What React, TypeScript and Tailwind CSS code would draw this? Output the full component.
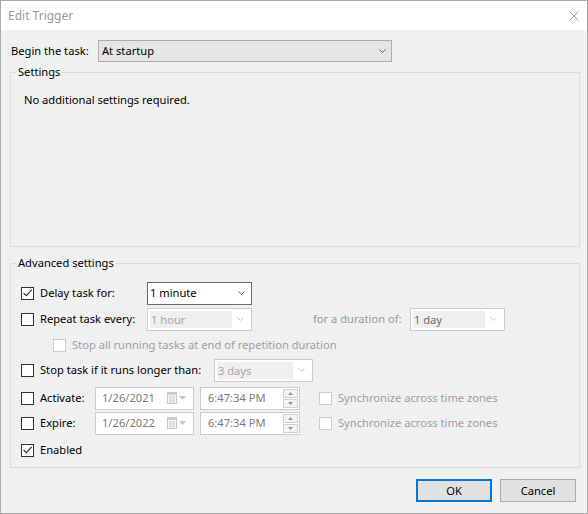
import React from "react";

const Chevron = ({ color = "#606060" }: { color?: string }) => (
  <svg width="7" height="4" viewBox="0 0 7 4" className="block">
    <path d="M0.5 0.5 L3.5 3.5 L6.5 0.5" fill="none" stroke={color} strokeWidth="1" />
  </svg>
);

const Box = ({ checked = false, disabled = false }: { checked?: boolean; disabled?: boolean }) => (
  <div
    className={
      disabled
        ? "w-[13px] h-[13px] border border-[#cccccc] bg-white shrink-0 flex items-center justify-center"
        : "w-[13px] h-[13px] border border-[#333333] bg-white shrink-0 flex items-center justify-center"
    }
  >
    {checked && (
      <svg width="11" height="11" viewBox="0 0 11 11" className="block">
        <path d="M1.5 4.8 L4.4 7.7 L9.6 1.8" fill="none" stroke="#333333" strokeWidth="1.2" />
      </svg>
    )}
  </div>
);

const DisabledCombo = ({ text, w, textColor }: { text: string; w: string; textColor: string }) => (
  <div className={`${w} h-[23px] border border-[#cccccc] bg-white p-[2px] flex shrink-0`}>
    <div className={`flex-1 bg-[#efefef] pl-[1px] leading-[17px] ${textColor}`}>{text}</div>
    <div className="w-[17px] flex items-center justify-center">
      <Chevron color="#c4c4c4" />
    </div>
  </div>
);

const CalIcon = () => (
  <svg width="10" height="12" viewBox="0 0 10 12" className="block">
    <rect x="0.5" y="0.5" width="9" height="11" fill="#f4f4f4" stroke="#c8c8c8" />
    <rect x="1" y="1" width="8" height="2" fill="#d0d0d0" />
    <path d="M2 5h6M2 7h6M2 9h6M3.5 4v7M6.5 4v7" stroke="#d6d6d6" strokeWidth="1" />
  </svg>
);

const DatePicker = ({ text }: { text: string }) => (
  <div className="w-[99px] h-[23px] border border-[#cccccc] bg-white flex items-center shrink-0">
    <span className="pl-[6px] text-[#7a7a7a] w-[71px]">{text}</span>
    <CalIcon />
    <svg width="7" height="4" viewBox="0 0 7 4" className="block ml-[2px]">
      <path d="M0 0 L7 0 L3.5 4Z" fill="#c4c4c4" />
    </svg>
  </div>
);

const Spin = () => (
  <div className="flex flex-col gap-[1px]">
    <div className="w-[15px] h-[9px] border border-[#d0d0d0] bg-[#f3f3f3] flex items-center justify-center">
      <svg width="5" height="3" viewBox="0 0 5 3" className="block">
        <path d="M0 3 L2.5 0 L5 3Z" fill="#9a9a9a" />
      </svg>
    </div>
    <div className="w-[15px] h-[9px] border border-[#d0d0d0] bg-[#f3f3f3] flex items-center justify-center">
      <svg width="5" height="3" viewBox="0 0 5 3" className="block">
        <path d="M0 0 L5 0 L2.5 3Z" fill="#9a9a9a" />
      </svg>
    </div>
  </div>
);

const TimePicker = () => (
  <div className="w-[100px] h-[23px] border border-[#cccccc] bg-white flex items-center justify-between pr-[1px] shrink-0 ml-[6px]">
    <span className="pl-[7px] text-[#7a7a7a]">6:47:34 PM</span>
    <Spin />
  </div>
);

export default function App() {
  return (
    <div className="w-[588px] h-[514px] border border-[#aaaaaa] bg-[#f0f0f0] flex flex-col text-[11.15px] leading-[16px] text-black [font-family:'Noto_Sans',sans-serif]">
      {/* title bar */}
      <div className="h-[29px] bg-white flex items-center justify-between pl-[7px] pr-[8px] shrink-0">
        <span className="text-[#999999] text-[12px]">Edit Trigger</span>
        <svg width="10" height="10" viewBox="0 0 10 10" className="block">
          <path d="M0.5 0.5 L9.5 9.5 M9.5 0.5 L0.5 9.5" stroke="#9a9a9a" strokeWidth="1" />
        </svg>
      </div>

      <div className="flex-1 flex flex-col pl-[9px] pr-[7px]">
        {/* begin row */}
        <div className="mt-[10px] h-[22px] flex items-center">
          <span className="w-[88px] pl-[1px]">Begin the task:</span>
          <div className="w-[294px] h-[22px] bg-[#e5e5e5] border border-[#adadad] flex items-center justify-between pl-[3px] pr-[5px]">
            <span>At startup</span>
            <Chevron />
          </div>
        </div>

        {/* Settings group */}
        <div className="mt-[10px] h-[175px] border border-[#dcdcdc] flex flex-col">
          <div className="-mt-[9px] ml-[5px] px-[2px] w-fit bg-[#f0f0f0] h-[16px]">Settings</div>
          <div className="mt-[12px] ml-[13px]">No additional settings required.</div>
        </div>

        {/* Advanced group */}
        <div className="mt-[16px] h-[205px] border border-[#dcdcdc] flex flex-col">
          <div className="-mt-[9px] ml-[5px] px-[2px] w-fit bg-[#f0f0f0] h-[16px]">Advanced settings</div>

          {/* Delay */}
          <div className="mt-[11px] h-[22px] flex items-center pl-[10px]">
            <Box checked />
            <span className="ml-[6px] w-[107px]">Delay task for:</span>
            <div className="w-[105px] h-[23px] bg-white border border-[#6a6a6a] flex items-center justify-between pl-[2px] pr-[6px]">
              <span>1 minute</span>
              <Chevron />
            </div>
          </div>

          {/* Repeat */}
          <div className="mt-[4px] h-[22px] flex items-center pl-[10px]">
            <Box />
            <span className="ml-[6px] w-[107px]">Repeat task every:</span>
            <DisabledCombo text="1 hour" w="w-[105px]" textColor="text-[#a8a8a8]" />
            <span className="ml-[61px] w-[97px] text-[#9a9a9a]">for a duration of:</span>
            <DisabledCombo text="1 day" w="w-[95px]" textColor="text-[#6d6d6d]" />
          </div>

          {/* Stop all */}
          <div className="mt-[4px] h-[22px] flex items-center pl-[42px]">
            <Box disabled />
            <span className="ml-[6px] text-[#a0a0a0]">Stop all running tasks at end of repetition duration</span>
          </div>

          {/* Stop task */}
          <div className="mt-[3px] h-[22px] flex items-center pl-[10px]">
            <Box />
            <span className="ml-[6px] w-[174px]">Stop task if it runs longer than:</span>
            <DisabledCombo text="3 days" w="w-[99px]" textColor="text-[#a8a8a8]" />
          </div>

          {/* Activate */}
          <div className="mt-[6px] h-[22px] flex items-center pl-[10px]">
            <Box />
            <span className="ml-[6px] w-[55px]">Activate:</span>
            <DatePicker text="1/26/2021" />
            <TimePicker />
            <div className="ml-[19px]">
              <Box disabled />
            </div>
            <span className="ml-[6px] text-[#a0a0a0]">Synchronize across time zones</span>
          </div>

          {/* Expire */}
          <div className="mt-[3px] h-[22px] flex items-center pl-[10px]">
            <Box />
            <span className="ml-[6px] w-[55px]">Expire:</span>
            <DatePicker text="1/26/2022" />
            <TimePicker />
            <div className="ml-[19px]">
              <Box disabled />
            </div>
            <span className="ml-[6px] text-[#a0a0a0]">Synchronize across time zones</span>
          </div>

          {/* Enabled */}
          <div className="mt-[5px] h-[22px] flex items-center pl-[10px]">
            <Box checked />
            <span className="ml-[6px]">Enabled</span>
          </div>
        </div>

        {/* buttons */}
        <div className="mt-[11px] flex justify-end gap-[8px] pr-[4px]">
          <div className="w-[76px] h-[23px] border-2 border-[#0078d7] bg-[#e1e1e1] flex items-center justify-center">OK</div>
          <div className="w-[76px] h-[23px] border border-[#adadad] bg-[#e1e1e1] flex items-center justify-center">Cancel</div>
        </div>
      </div>
    </div>
  );
}
